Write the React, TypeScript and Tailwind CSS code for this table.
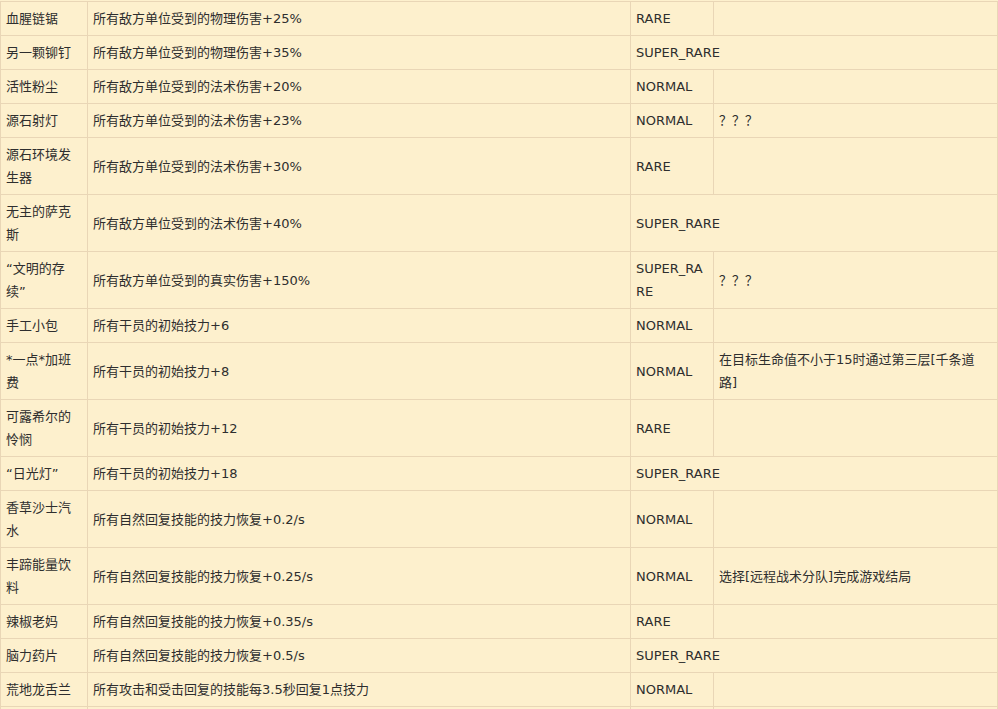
type Row = {
  name: string;
  effect: string;
  rarity: string;
  cond?: string;
  span?: boolean;
};

const rows: Row[] = [
  { name: "血腥链锯", effect: "所有敌方单位受到的物理伤害+25%", rarity: "RARE", cond: "" },
  { name: "另一颗铆钉", effect: "所有敌方单位受到的物理伤害+35%", rarity: "SUPER_RARE", span: true },
  { name: "活性粉尘", effect: "所有敌方单位受到的法术伤害+20%", rarity: "NORMAL", cond: "" },
  { name: "源石射灯", effect: "所有敌方单位受到的法术伤害+23%", rarity: "NORMAL", cond: "？？？" },
  { name: "源石环境发生器", effect: "所有敌方单位受到的法术伤害+30%", rarity: "RARE", cond: "" },
  { name: "无主的萨克斯", effect: "所有敌方单位受到的法术伤害+40%", rarity: "SUPER_RARE", span: true },
  { name: "“文明的存续”", effect: "所有敌方单位受到的真实伤害+150%", rarity: "SUPER_RARE", cond: "？？？" },
  { name: "手工小包", effect: "所有干员的初始技力+6", rarity: "NORMAL", cond: "" },
  { name: "*一点*加班费", effect: "所有干员的初始技力+8", rarity: "NORMAL", cond: "在目标生命值不小于15时通过第三层[千条道路]" },
  { name: "可露希尔的怜悯", effect: "所有干员的初始技力+12", rarity: "RARE", cond: "" },
  { name: "“日光灯”", effect: "所有干员的初始技力+18", rarity: "SUPER_RARE", span: true },
  { name: "香草沙士汽水", effect: "所有自然回复技能的技力恢复+0.2/s", rarity: "NORMAL", cond: "" },
  { name: "丰蹄能量饮料", effect: "所有自然回复技能的技力恢复+0.25/s", rarity: "NORMAL", cond: "选择[远程战术分队]完成游戏结局" },
  { name: "辣椒老妈", effect: "所有自然回复技能的技力恢复+0.35/s", rarity: "RARE", cond: "" },
  { name: "脑力药片", effect: "所有自然回复技能的技力恢复+0.5/s", rarity: "SUPER_RARE", span: true },
  { name: "荒地龙舌兰", effect: "所有攻击和受击回复的技能每3.5秒回复1点技力", rarity: "NORMAL", cond: "" },
];

const td = "border border-[#e9d6b6] py-[5px] pl-[5px] align-middle break-all";

export default function App() {
  return (
    <div
      className="h-[709px] w-[998px] overflow-hidden bg-[#fdf0cd] pt-[1px] text-[13px] leading-[23px] text-[#2e2e2e]"
      style={{ fontFamily: '"DejaVu Sans", "Noto Sans CJK SC", sans-serif' }}
    >
      <table className="w-[997px] table-fixed border-collapse">
        <colgroup>
          <col className="w-[87px]" />
          <col className="w-[543px]" />
          <col className="w-[83px]" />
          <col className="w-[284px]" />
        </colgroup>
        <tbody>
          {rows.map((r) => (
            <tr key={r.name}>
              <td className={`${td} pr-[11px]`}>{r.name}</td>
              <td className={`${td} pr-[5px]`}>{r.effect}</td>
              {r.span ? (
                <td colSpan={2} className={`${td} pr-[5px]`}>
                  {r.rarity}
                </td>
              ) : (
                <>
                  <td className={`${td} pr-[5px]`}>{r.rarity}</td>
                  <td className={`${td} pr-[12px]`}>{r.cond}</td>
                </>
              )}
            </tr>
          ))}
          {/* next row only shows its top edge in the viewport */}
          <tr>
            <td className={`${td} pr-[11px]`}>&nbsp;</td>
            <td className={`${td} pr-[5px]`}>&nbsp;</td>
            <td className={`${td} pr-[5px]`}>&nbsp;</td>
            <td className={`${td} pr-[12px]`}>&nbsp;</td>
          </tr>
        </tbody>
      </table>
    </div>
  );
}
